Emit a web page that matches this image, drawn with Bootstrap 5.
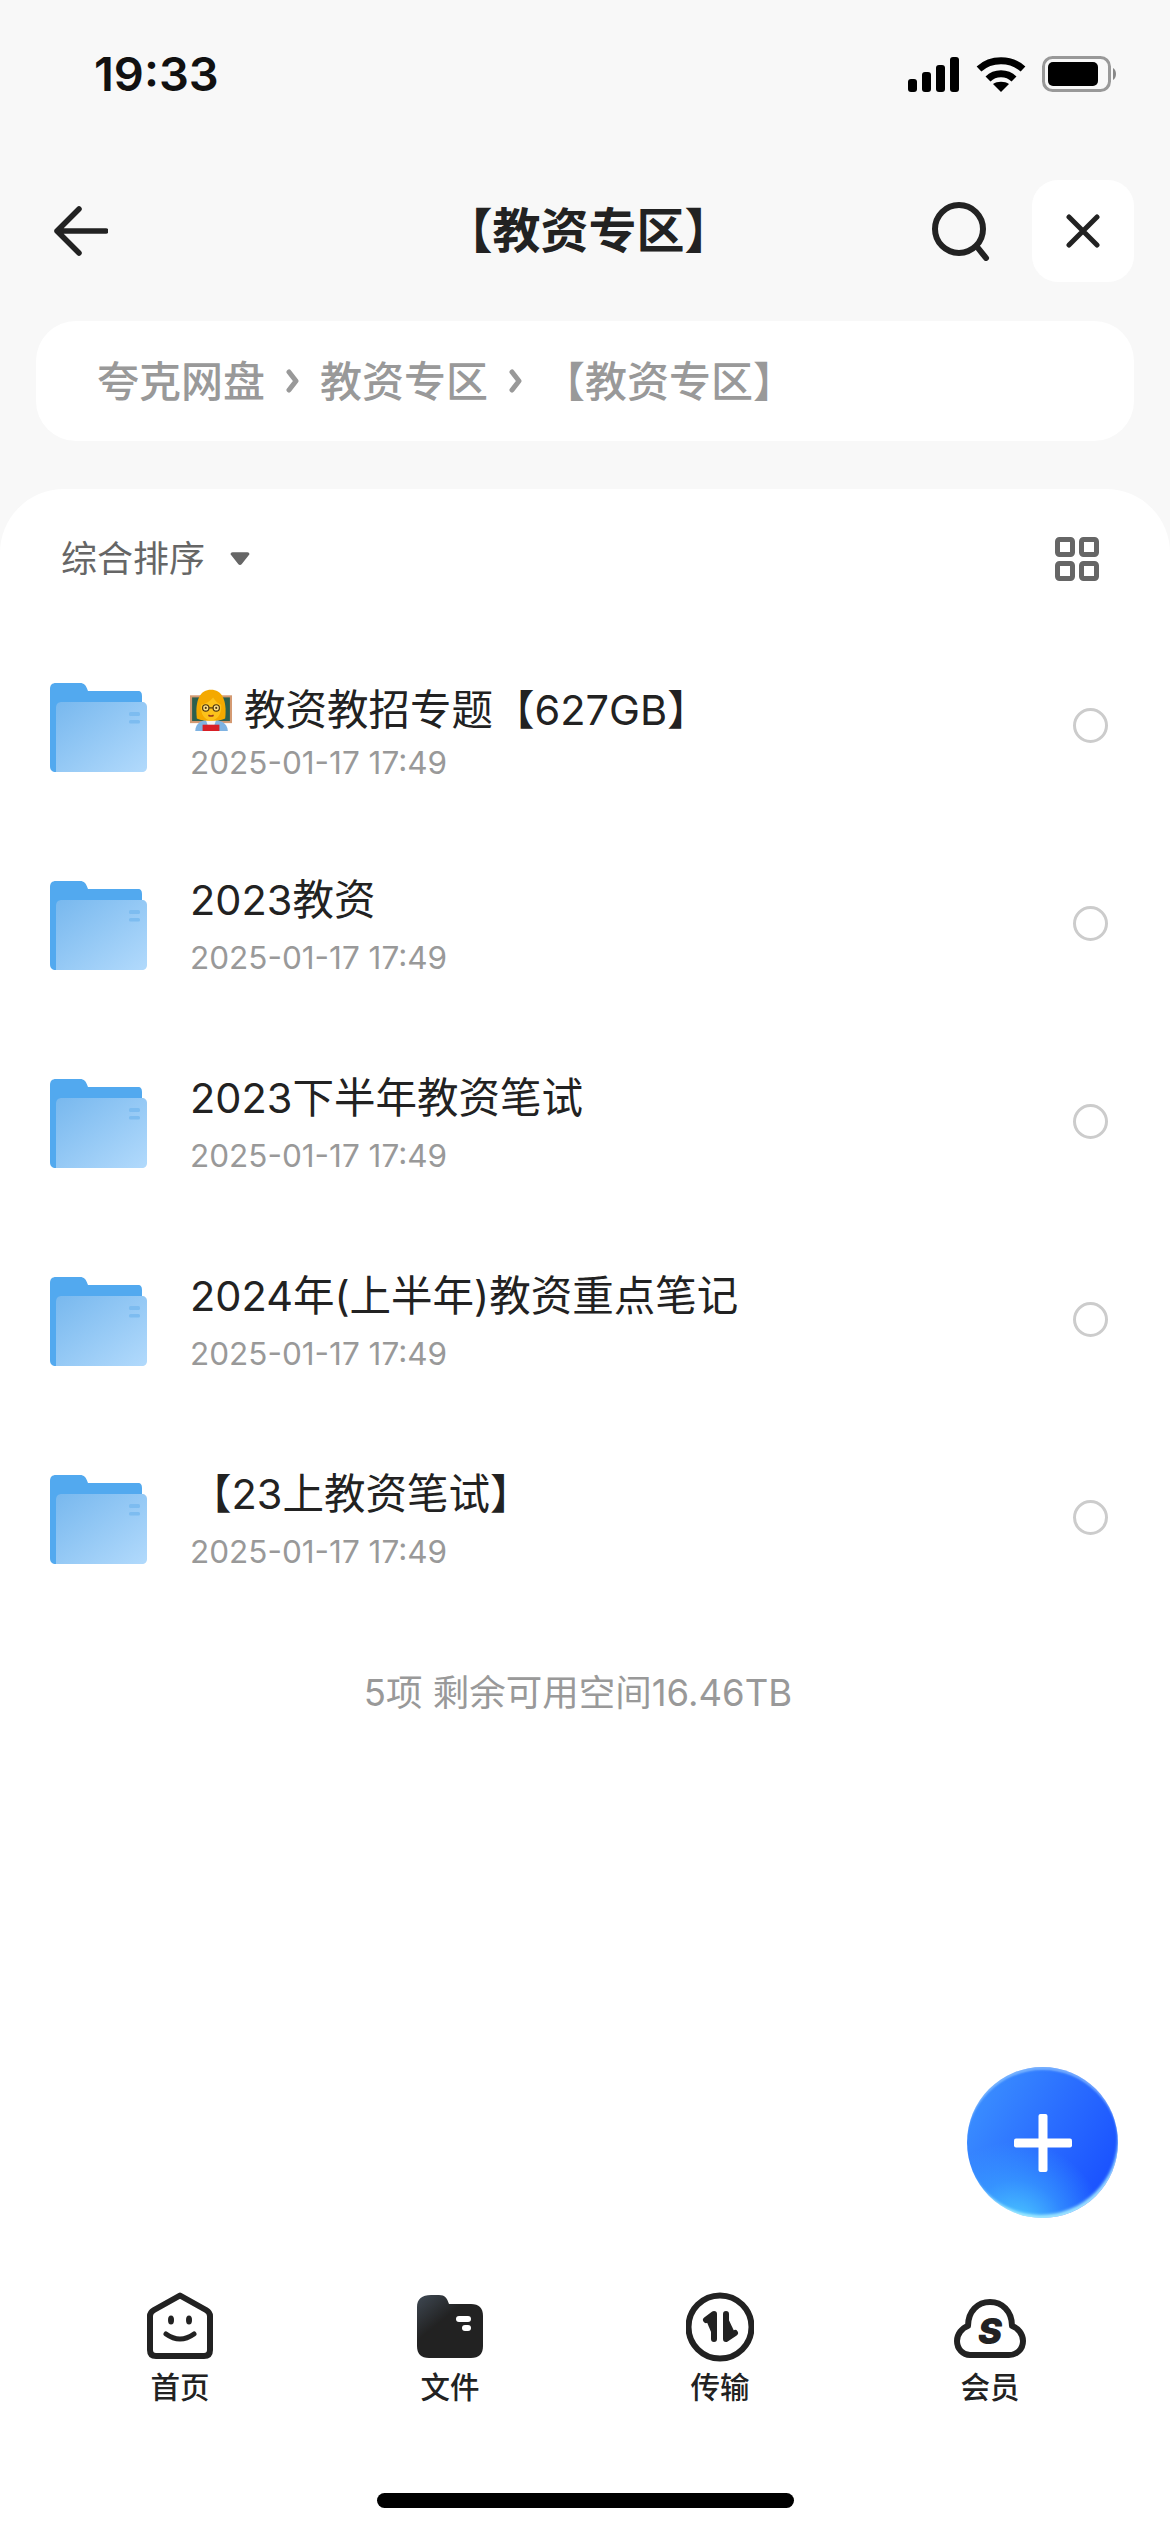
<!DOCTYPE html>
<html lang="zh-CN">
<head>
  <meta charset="UTF-8" />
  <title>【教资专区】</title>
  <meta name="viewport" content="width=device-width, initial-scale=1" />
  <link href="https://cdn.jsdelivr.net/npm/bootstrap@5.3.0/dist/css/bootstrap.min.css" rel="stylesheet" />
  <style>
    body { width: 1170px; height: 2532px; overflow: hidden; background: #f8f8f8; color: #222; font-family: Inter, "Noto Sans CJK SC", sans-serif; }
    .screen { height: 2532px; position: relative; }
    .status-row { height: 180px; padding: 56px 52px 0 94px; }
    .clock { font-size: 47px; line-height: 36px; font-weight: 600; color: #111; letter-spacing: 0; }
    .nav-row { height: 102px; padding: 0 36px 0 54px; }
    .nav-left { width: 193px; }
    .nav-title { font-size: 48px; font-weight: 700; line-height: 60px; color: #222; }
    .close-box { width: 102px; height: 102px; border-radius: 26px; margin-left: 42px; }
    .crumb-box { height: 120px; margin: 39px 36px 48px; padding-left: 61px; border-radius: 40px; gap: 21px; font-size: 42px; font-weight: 500; color: #999; }
    .sheet { border-radius: 64px 64px 0 0; }
    .sort-row { height: 139px; padding: 0 71px 0 61px; }
    .sort-label { font-size: 36px; color: #666; }
    .sort-caret { margin-left: 25px; }
    .file-row { height: 198px; padding: 0 62px 0 50px; background: transparent; }
    .file-info { margin-left: 42px; }
    .file-name { font-size: 41.5px; line-height: 54px; color: #222; gap: 12px; }
    .file-date { font-size: 31.5px; line-height: 38px; color: #999; margin-top: 12px; }
    .first-row .file-name { margin-top: 10px; }
    .first-row .file-date { margin-top: 7px; }
    .pick-dot { width: 35px; height: 35px; border: 3px solid #ccc; border-radius: 50%; margin-bottom: 3px; }
    .list-end { font-size: 36.5px; line-height: 48px; color: #999; margin-top: 51px; padding-right: 14px; }
    .fab { position: absolute; left: 967px; top: 2067px; width: 151px; height: 151px; border-radius: 50%; padding: 0; border: 0;
      background: radial-gradient(circle at 32% 108%, #4fd2ff 0, rgba(60,170,255,.55) 26%, rgba(40,120,255,0) 46%), linear-gradient(120deg, #3f97ff 0%, #2a6dff 50%, #1448ff 100%);
      box-shadow: inset 0 4px 2px -1px rgba(170,215,255,.55), inset -2px -5px 3px -2px rgba(170,240,255,.9); }
    .tab-bar { position: absolute; left: 0; right: 0; top: 2292px; padding: 0 45px; }
    .tab-item { width: 270px; }
    .tab-icon { height: 70px; }
    .tab-label { font-size: 29.5px; line-height: 36px; font-weight: 500; color: #222; margin-top: 7px; }
    .home-bar { position: absolute; left: 377px; top: 2493px; width: 417px; height: 15px; border-radius: 8px; background: #000; }
  </style>
</head>
<body>
  <div class="screen d-flex flex-column">

    <div class="status-row d-flex justify-content-between align-items-start">
      <div class="clock">19:33</div>
      <div class="d-flex align-items-start">
        <svg width="52" height="36" viewBox="0 0 52 36" fill="#000">
          <rect x="0" y="23" width="9" height="13" rx="3"/><rect x="14" y="16" width="9" height="20" rx="3"/>
          <rect x="28" y="9" width="9" height="27" rx="3"/><rect x="42" y="1" width="9" height="35" rx="3"/>
        </svg>
        <svg class="ms-3" width="50" height="36" viewBox="0 0 50 36" fill="none" stroke="#000" stroke-width="7">
          <path d="M3 13 C15 2 35 2 47 13"/><path d="M12 23 C19 16 31 16 38 23"/>
          <path d="M25 36 L17 28 C21 25 29 25 33 28 Z" fill="#000" stroke="none"/>
        </svg>
        <svg class="ms-3" width="76" height="36" viewBox="0 0 76 36">
          <rect x="1.5" y="1.5" width="66" height="33" rx="9" fill="none" stroke="#999" stroke-width="3"/>
          <rect x="6" y="6" width="50" height="24" rx="5" fill="#000"/>
          <path d="M71 12 C75 14 75 22 71 24 Z" fill="#888"/>
        </svg>
      </div>
    </div>

    <div class="nav-row d-flex align-items-center">
      <div class="nav-left">
        <svg class="d-block" width="54" height="50" viewBox="0 0 54 50" fill="none" stroke="#222" stroke-width="5.5" stroke-linecap="round" stroke-linejoin="round">
          <path d="M52 25 H3 M25 3 L3 25 L25 47"/>
        </svg>
      </div>
      <div class="nav-title flex-grow-1 text-center">【教资专区】</div>
      <svg width="60" height="60" viewBox="0 0 60 60" fill="none" stroke="#222" stroke-width="6" stroke-linecap="round">
        <circle cx="29" cy="28" r="24"/><path d="M48 47 L56 57"/>
      </svg>
      <div class="close-box bg-white d-flex align-items-center justify-content-center">
        <svg width="34" height="34" viewBox="0 0 34 34" fill="none" stroke="#222" stroke-width="5" stroke-linecap="round">
          <path d="M3 3 L31 31 M31 3 L3 31"/>
        </svg>
      </div>
    </div>

    <div class="crumb-box bg-white d-flex align-items-center">
      <span>夸克网盘</span>
      <svg width="13" height="24" viewBox="0 0 13 24" fill="none" stroke="#999" stroke-width="5" stroke-linecap="round" stroke-linejoin="round"><path d="M3 3 L10 12 L3 21"/></svg>
      <span>教资专区</span>
      <svg width="13" height="24" viewBox="0 0 13 24" fill="none" stroke="#999" stroke-width="5" stroke-linecap="round" stroke-linejoin="round"><path d="M3 3 L10 12 L3 21"/></svg>
      <span>【教资专区】</span>
    </div>

    <div class="sheet bg-white flex-grow-1">
      <svg width="0" height="0" class="position-absolute">
        <defs>
          <linearGradient id="folderFace" x1="0" y1="0" x2="1" y2="1">
            <stop offset="0" stop-color="#78b8ee"/><stop offset="1" stop-color="#b2dafc"/>
          </linearGradient>
          <linearGradient id="tabFolder" x1="0" y1="0" x2="0.6" y2="0.7">
            <stop offset="0" stop-color="#3f4954"/><stop offset="0.6" stop-color="#222"/><stop offset="1" stop-color="#222"/>
          </linearGradient>
          <symbol id="folderIcon" viewBox="0 0 98 90">
            <path d="M6 1 H30 C34 1 36 3 38 9 H88 C91 9 92 11 92 14 V90 H6 C2 90 0 88 0 84 V7 C0 3 2 1 6 1 Z" fill="#52a9ef"/>
            <path d="M12 20 H92 C95 20 97 22 97 25 V85 C97 88 95 90 92 90 H6 V26 C6 22 8 20 12 20 Z" fill="url(#folderFace)"/>
            <rect x="79" y="30" width="11" height="4" rx="1.5" fill="#7dbcf0"/>
            <rect x="79" y="38" width="11" height="3.5" rx="1.5" fill="#7dbcf0"/>
          </symbol>
        </defs>
      </svg>

      <div class="sort-row d-flex align-items-center justify-content-between">
        <div class="d-flex align-items-center">
          <span class="sort-label">综合排序</span>
          <svg class="sort-caret" width="20" height="15" viewBox="0 0 22 16"><path d="M3 1 H19 C21 1 22 3 21 4 L13 14 C12 15.500 10 15.500 9 14 L1 4 C0 3 1 1 3 1 Z" fill="#666"/></svg>
        </div>
        <svg width="44" height="44" viewBox="0 0 44 44" fill="none" stroke="#666" stroke-width="5">
          <rect x="2.500" y="2.500" width="15" height="15" rx="2"/><rect x="26.500" y="2.500" width="15" height="15" rx="2"/>
          <rect x="2.500" y="26.500" width="15" height="15" rx="2"/><rect x="26.500" y="26.500" width="15" height="15" rx="2"/>
        </svg>
      </div>

      <div class="list-group list-group-flush">
        <div class="list-group-item file-row first-row border-0 d-flex align-items-center">
          <svg width="98" height="90"><use href="#folderIcon"/></svg>
          <div class="file-info flex-grow-1">
            <div class="file-name d-flex align-items-center">
              <svg width="42" height="42" viewBox="0 0 40 40">
                <rect x="1" y="7" width="38" height="24.500" fill="#2c5f4e" stroke="#d49a72" stroke-width="2"/>
                <path d="M5 40 C5 32 12 29 20 29 C28 29 36 32 36 40 Z" fill="#7fb3e2"/>
                <path d="M15 29 H25 L23 35 H17 Z" fill="#f4f4f4"/>
                <rect x="12" y="34" width="16" height="6" fill="#d81f26"/>
                <path d="M6.500 28 C4.500 10 10 .7 20 .7 C30 .7 35.500 10 33.500 28 C28 31 12 31 6.500 28 Z" fill="#f4a900"/>
                <path d="M10.500 15 C15 14 19 12 22 8 C24 11.500 27 14 29.700 15 C30.500 24 25.500 30 20 30 C14.500 30 9.500 24 10.500 15 Z" fill="#fcc21b"/>
                <g fill="#fde28a" stroke="#4b3410" stroke-width="1.100"><circle cx="15" cy="18" r="3"/><circle cx="25" cy="18" r="3"/><path d="M18 18 H22"/></g>
                <circle cx="15" cy="18" r="1" fill="#4b3410"/><circle cx="25" cy="18" r="1" fill="#4b3410"/>
                <path d="M17.500 25 Q20 26.500 22.500 25" stroke="#9b3a1a" stroke-width="1.400" fill="none"/>
              </svg>
              <span>教资教招专题【627GB】</span>
            </div>
            <div class="file-date">2025-01-17 17:49</div>
          </div>
          <div class="pick-dot"></div>
        </div>
        <div class="list-group-item file-row border-0 d-flex align-items-center">
          <svg width="98" height="90"><use href="#folderIcon"/></svg>
          <div class="file-info flex-grow-1">
            <div class="file-name">2023教资</div>
            <div class="file-date">2025-01-17 17:49</div>
          </div>
          <div class="pick-dot"></div>
        </div>
        <div class="list-group-item file-row border-0 d-flex align-items-center">
          <svg width="98" height="90"><use href="#folderIcon"/></svg>
          <div class="file-info flex-grow-1">
            <div class="file-name">2023下半年教资笔试</div>
            <div class="file-date">2025-01-17 17:49</div>
          </div>
          <div class="pick-dot"></div>
        </div>
        <div class="list-group-item file-row border-0 d-flex align-items-center">
          <svg width="98" height="90"><use href="#folderIcon"/></svg>
          <div class="file-info flex-grow-1">
            <div class="file-name">2024年(上半年)教资重点笔记</div>
            <div class="file-date">2025-01-17 17:49</div>
          </div>
          <div class="pick-dot"></div>
        </div>
        <div class="list-group-item file-row border-0 d-flex align-items-center">
          <svg width="98" height="90"><use href="#folderIcon"/></svg>
          <div class="file-info flex-grow-1">
            <div class="file-name">【23上教资笔试】</div>
            <div class="file-date">2025-01-17 17:49</div>
          </div>
          <div class="pick-dot"></div>
        </div>
      </div>

      <div class="list-end text-center">5项 剩余可用空间16.46TB</div>
    </div>

    <button class="fab btn d-flex align-items-center justify-content-center" type="button" aria-label="新建">
      <svg width="58" height="58" viewBox="0 0 58 58" fill="#fff">
        <rect x="24.500" y="0" width="9" height="58" rx="2"/><rect x="0" y="24.500" width="58" height="9" rx="2"/>
      </svg>
    </button>

    <div class="tab-bar d-flex">
      <div class="tab-item d-flex flex-column align-items-center">
        <div class="tab-icon">
          <svg class="d-block" width="66" height="68" viewBox="0 0 66 68" fill="none" stroke="#222" stroke-width="6" stroke-linejoin="round" stroke-linecap="round">
            <path d="M33 3.500 L59 18 C61.500 19.500 63 21 63 24 V58 C63 62 61 64 57 64 H9 C5 64 3 62 3 58 V24 C3 21 4.500 19.500 7 18 Z"/>
            <ellipse cx="24" cy="28" rx="3" ry="4.500" fill="#222" stroke="none"/><ellipse cx="42" cy="28" rx="3" ry="4.500" fill="#222" stroke="none"/>
            <path d="M19 42 Q33 52 47 42" stroke-width="5"/>
          </svg>
        </div>
        <div class="tab-label">首页</div>
      </div>
      <div class="tab-item d-flex flex-column align-items-center">
        <div class="tab-icon">
          <svg class="d-block" width="66" height="66" viewBox="0 0 66 66">
            <path d="M14 3 H22 C28 3 30 6 32 12 H54 C62 12 66 16 66 24 V54 C66 62 62 66 54 66 H12 C4 66 0 62 0 54 V15 C0 7 5 3 14 3 Z" fill="url(#tabFolder)"/>
            <rect x="39" y="24" width="15" height="6" rx="3" fill="#fff"/><rect x="45" y="33" width="9" height="6" rx="3" fill="#fff"/>
          </svg>
        </div>
        <div class="tab-label">文件</div>
      </div>
      <div class="tab-item d-flex flex-column align-items-center">
        <div class="tab-icon">
          <svg class="d-block" width="68" height="70" viewBox="0 0 68 70" fill="none" stroke="#222" stroke-width="6" stroke-linecap="round" stroke-linejoin="round">
            <circle cx="34" cy="35" r="31.500"/>
            <path d="M28 47 V22 L20 28" fill="#222"/><path d="M40 22 V47 L49 41" fill="#222"/>
          </svg>
        </div>
        <div class="tab-label">传输</div>
      </div>
      <div class="tab-item d-flex flex-column align-items-center">
        <div class="tab-icon">
          <svg class="d-block" width="72" height="68" viewBox="0 0 72 68" fill="none" stroke="#222" stroke-width="6" stroke-linejoin="round">
            <path d="M16 63 H55 C63 63 69 57 69 49 C69 42 64 36 58 34 C58 19 48 10 36 10 C24 10 14 19 14 34 C8 36 3 42 3 49 C3 57 9 63 16 63 Z"/>
            <text x="36" y="52" text-anchor="middle" font-family="Inter" font-size="36" font-weight="900" font-style="italic" fill="#222" stroke="none">S</text>
          </svg>
        </div>
        <div class="tab-label">会员</div>
      </div>
    </div>

    <div class="home-bar"></div>
  </div>
  <script src="https://cdn.jsdelivr.net/npm/bootstrap@5.3.0/dist/js/bootstrap.bundle.min.js"></script>
</body>
</html>
